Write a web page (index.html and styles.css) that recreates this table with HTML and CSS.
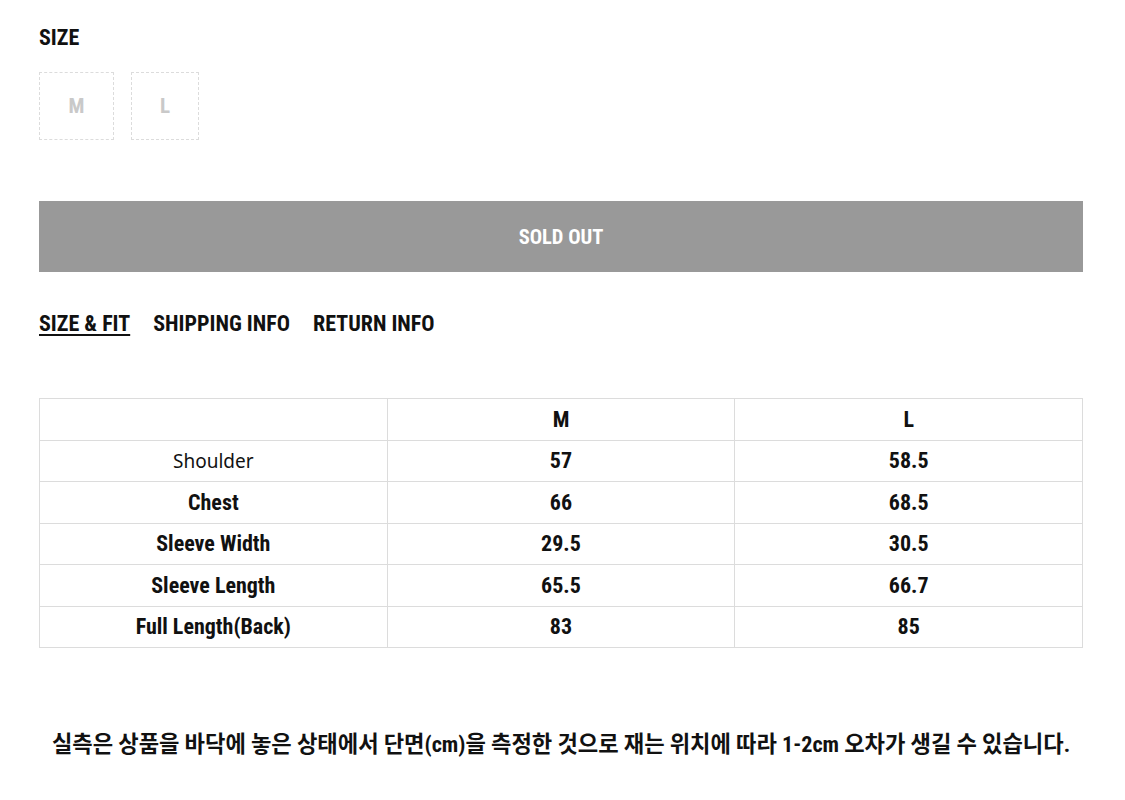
FILE: index.html
```html
<!DOCTYPE html>
<html lang="ko">
<head>
<meta charset="utf-8">
<title>Size</title>
<link rel="stylesheet" href="styles.css">
</head>
<body>
<div class="page">
  <section class="size-select">
    <h2 class="label">SIZE</h2>
    <div class="options">
      <span class="opt opt-m">M</span>
      <span class="opt opt-l">L</span>
    </div>
  </section>

  <div class="soldout">SOLD OUT</div>

  <nav class="tabs">
    <a class="tab active">SIZE &amp; FIT</a>
    <a class="tab">SHIPPING INFO</a>
    <a class="tab">RETURN INFO</a>
  </nav>

  <table class="chart">
    <tr><td></td><td class="b">M</td><td class="b">L</td></tr>
    <tr><td class="reg">Shoulder</td><td class="b">57</td><td class="b">58.5</td></tr>
    <tr><td class="b">Chest</td><td class="b">66</td><td class="b">68.5</td></tr>
    <tr><td class="b">Sleeve Width</td><td class="b">29.5</td><td class="b">30.5</td></tr>
    <tr><td class="b">Sleeve Length</td><td class="b">65.5</td><td class="b">66.7</td></tr>
    <tr><td class="b">Full Length(Back)</td><td class="b">83</td><td class="b">85</td></tr>
  </table>

  <p class="note">실측은 상품을 바닥에 놓은 상태에서 단면(cm)을 측정한 것으로 재는 위치에 따라 1-2cm 오차가 생길 수 있습니다.</p>
</div>
</body>
</html>
```

FILE: styles.css
```css
html, body {
  margin: 0;
  padding: 0;
  background: #fff;
}
body {
  font-family: "Roboto Condensed", "Liberation Sans Narrow", Roboto, "Noto Sans CJK KR", sans-serif;
  font-stretch: condensed;
  color: #111;
}
.page {
  width: 1044px;
  margin-left: 39px;
  padding-top: 26px;
}
.label {
  margin: 0;
  font-size: 22px;
  font-weight: 700;
  line-height: 24px;
}
.options {
  display: flex;
  gap: 17px;
  margin-top: 22px;
}
.opt {
  box-sizing: border-box;
  height: 68px;
  border: 1px dashed #dcdcdc;
  display: flex;
  align-items: center;
  justify-content: center;
  color: #c9c9c9;
  font-size: 21px;
  font-weight: 700;
}
.opt-m { width: 75px; }
.opt-l { width: 68px; }
.soldout {
  margin-top: 61px;
  height: 71px;
  background: #999;
  color: #fff;
  font-size: 20.5px;
  font-weight: 700;
  display: flex;
  align-items: center;
  justify-content: center;
}
.tabs {
  display: flex;
  gap: 23px;
  margin-top: 40px;
}
.tab {
  font-size: 22px;
  font-weight: 700;
  line-height: 24px;
  color: #111;
}
.tab.active {
  text-decoration: underline;
  text-underline-offset: 3px;
  text-decoration-thickness: 2px;
}
.chart {
  margin-top: 62px;
  width: 1044px;
  border-collapse: collapse;
  table-layout: fixed;
}
.chart td {
  border: 1px solid #dcdcdc;
  height: 40.5px;
  padding: 0;
  text-align: center;
  vertical-align: middle;
  font-size: 22px;
}
.chart td.b { font-weight: 700; }
.chart td.reg {
  font-family: "Noto Sans", "Open Sans", sans-serif;
  font-stretch: normal;
  font-weight: 400;
  font-size: 19px;
}
.note {
  margin: 78px 0 0;
  text-align: center;
  font-size: 22.2px;
  font-weight: 700;
}
```
